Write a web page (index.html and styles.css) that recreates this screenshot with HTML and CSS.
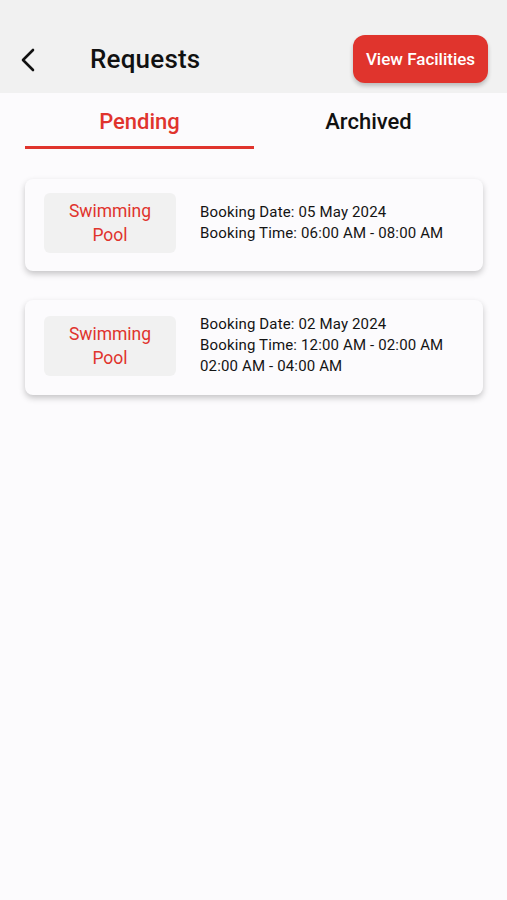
FILE: index.html
```html
<!DOCTYPE html>
<html>
<head>
<meta charset="utf-8">
<link rel="stylesheet" href="styles.css">
</head>
<body>
<header class="appbar">
  <div class="appbar-left">
    <button class="back" aria-label="Back">
      <svg width="16" height="24" viewBox="0 0 16 24"><path d="M13 2 L3 12 L13 22" fill="none" stroke="#111" stroke-width="2.6" stroke-linecap="round" stroke-linejoin="round"/></svg>
    </button>
    <h1 class="title">Requests</h1>
  </div>
  <button class="btn-primary">View Facilities</button>
</header>
<nav class="tabs">
  <div class="tab active">Pending</div>
  <div class="tab">Archived</div>
</nav>
<main class="list">
  <div class="card">
    <div class="badge">Swimming<br>Pool</div>
    <div class="info">
      <div>Booking Date: 05 May 2024</div>
      <div>Booking Time: 06:00 AM - 08:00 AM</div>
    </div>
  </div>
  <div class="card">
    <div class="badge">Swimming<br>Pool</div>
    <div class="info">
      <div>Booking Date: 02 May 2024</div>
      <div>Booking Time: 12:00 AM - 02:00 AM</div>
      <div>02:00 AM - 04:00 AM</div>
    </div>
  </div>
</main>
</body>
</html>
```

FILE: styles.css
```css
* { box-sizing: border-box; }
html, body {
  margin: 0;
  padding: 0;
  background: #fcfbfd;
  font-family: Roboto, "Liberation Sans", sans-serif;
  color: #111;
}
.appbar {
  height: 93px;
  background: #f1f1f1;
  display: flex;
  align-items: center;
  justify-content: space-between;
  padding: 25px 19px 0 19px;
}
.appbar-left {
  display: flex;
  align-items: center;
}
.back {
  background: none;
  border: 0;
  padding: 0;
  width: 18px;
  height: 26px;
  display: flex;
  align-items: center;
  justify-content: center;
  margin-top: 2px;
}
.title {
  margin: 0 0 0 53px;
  font-size: 26px;
  font-weight: 500;
  letter-spacing: 0.2px;
  color: #111;
}
.btn-primary {
  background: #e0342d;
  color: #fff;
  border: 0;
  border-radius: 12px;
  width: 135px;
  height: 48px;
  font-family: Roboto, "Liberation Sans", sans-serif;
  font-size: 17px;
  font-weight: 500;
  box-shadow: 0 3px 4px rgba(0,0,0,0.22);
}
.tabs {
  display: flex;
  padding: 0 25px;
  height: 56px;
}
.tab {
  flex: 0 0 229px;
  display: flex;
  align-items: center;
  justify-content: center;
  font-size: 22px;
  font-weight: 500;
  color: #111;
  padding-top: 3px;
  border-bottom: 3px solid transparent;
}
.tab.active {
  color: #e0342d;
  border-bottom-color: #e0342d;
}
.list {
  padding: 30px 24px 20px 25px;
  display: flex;
  flex-direction: column;
  gap: 29px;
}
.card {
  background: #fcfbfd;
  border-radius: 8px;
  box-shadow: 0 3px 6px rgba(0,0,0,0.22);
  display: flex;
  align-items: center;
  padding: 14px 18px 18px 19px;
  gap: 24px;
}
.badge {
  width: 132px;
  height: 60px;
  background: #f1f1f1;
  border-radius: 6px;
  color: #e0342d;
  font-size: 17.5px;
  line-height: 24px;
  text-align: center;
  display: flex;
  align-items: center;
  justify-content: center;
  flex: none;
}
.info {
  font-size: 15px;
  line-height: 21px;
  font-weight: 400;
  letter-spacing: 0.15px;
  color: #141414;
}
```
